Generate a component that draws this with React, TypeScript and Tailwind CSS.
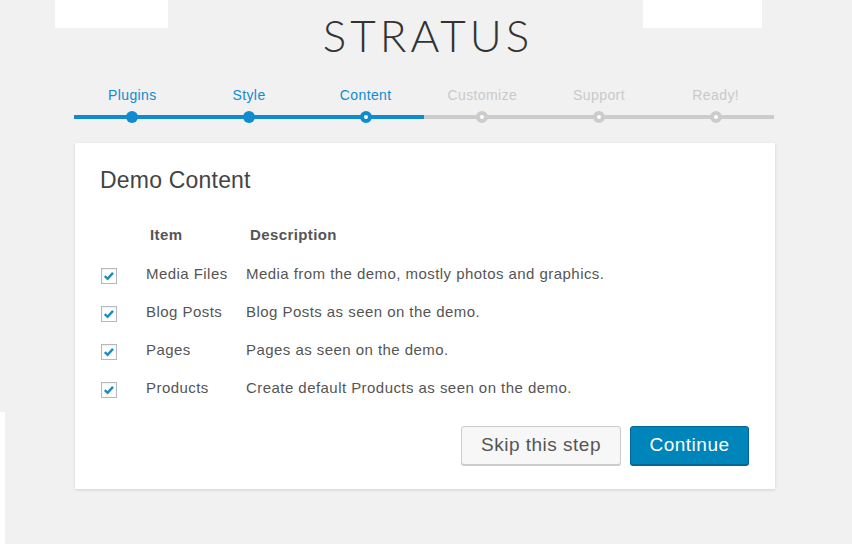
const steps = [
  { label: "Plugins", state: "done" },
  { label: "Style", state: "done" },
  { label: "Content", state: "active" },
  { label: "Customize", state: "todo" },
  { label: "Support", state: "todo" },
  { label: "Ready!", state: "todo" },
];

const items = [
  { name: "Media Files", desc: "Media from the demo, mostly photos and graphics." },
  { name: "Blog Posts", desc: "Blog Posts as seen on the demo." },
  { name: "Pages", desc: "Pages as seen on the demo." },
  { name: "Products", desc: "Create default Products as seen on the demo." },
];

function Checkbox() {
  return (
    <span className="flex size-4 items-center justify-center border border-[#b4b9be] bg-white shadow-[inset_0_1px_2px_rgba(0,0,0,0.07)]">
      <svg viewBox="0 0 16 16" className="size-[14px]">
        <path d="M3.2 8.2 L6.4 11.2 L12.6 4.4" fill="none" stroke="#1e8cbe" strokeWidth="2.8" />
      </svg>
    </span>
  );
}

export default function App() {
  return (
    <div className="relative min-h-[544px] bg-[#f1f1f1] font-['Liberation_Sans',Arial,sans-serif] text-[#444]">
      {/* stray white patches from the capture */}
      <div className="absolute left-[55px] top-0 h-[28px] w-[113px] bg-white" />
      <div className="absolute left-[643px] top-0 h-[28px] w-[119px] bg-white" />
      <div className="absolute left-0 top-[412px] h-[132px] w-[5px] bg-white" />

      <div className="relative pt-[13px] pl-[4px] text-center">
        <h1 className="font-['Lato',sans-serif] text-[44px] font-light leading-none tracking-[4px] text-[#333]">
          STRATUS
        </h1>
      </div>

      <ol className="relative mt-[28px] ml-[74px] flex w-[700px] pl-0">
        {steps.map((s) => {
          const blue = s.state !== "todo";
          return (
            <li key={s.label} className="flex flex-1 flex-col items-center">
              <span
                className={
                  "h-5 text-[14px] leading-5 tracking-[0.4px] " +
                  (blue ? "text-[#0f8ccf]" : "text-[#c9c9c9]")
                }
              >
                {s.label}
              </span>
              <div
                className={
                  "relative mt-[10px] h-1 w-full " + (blue ? "bg-[#0f8ccf]" : "bg-[#cccccc]")
                }
              >
                {s.state === "done" && (
                  <span className="absolute left-1/2 top-1/2 size-3 -translate-x-1/2 -translate-y-1/2 rounded-full bg-[#0f8ccf]" />
                )}
                {s.state === "active" && (
                  <span className="absolute left-1/2 top-1/2 size-3 -translate-x-1/2 -translate-y-1/2 rounded-full border-4 border-[#0f8ccf] bg-white" />
                )}
                {s.state === "todo" && (
                  <span className="absolute left-1/2 top-1/2 size-3 -translate-x-1/2 -translate-y-1/2 rounded-full border-4 border-[#cccccc] bg-white" />
                )}
              </div>
            </li>
          );
        })}
      </ol>

      <div className="relative mt-[24px] ml-[75px] w-[700px] bg-white px-[25px] pt-[23px] pb-[24px] shadow-[0_1px_3px_rgba(0,0,0,0.13)]">
        <h2 className="text-[23px] leading-[28px] tracking-[0.2px] text-[#444]">Demo Content</h2>

        <div className="mt-[21px] grid grid-cols-[46px_100px_1fr] text-[15px] tracking-[0.45px] text-[#555]">
          <div className="h-10" />
          <div className="flex h-10 items-center pl-1 text-[15px] font-bold tracking-[0.4px]">Item</div>
          <div className="flex h-10 items-center pl-1 text-[15px] font-bold tracking-[0.4px]">Description</div>
          {items.map((it) => (
            <div key={it.name} className="contents">
              <div className="flex h-[38px] items-center pl-px pt-[3px]">
                <Checkbox />
              </div>
              <div className="flex h-[38px] items-center">{it.name}</div>
              <div className="flex h-[38px] items-center">{it.desc}</div>
            </div>
          ))}
        </div>

        <div className="mt-[19px] flex justify-end gap-[9px] pr-px">
          <button className="h-[39px] w-[160px] rounded-[3px] border border-[#cccccc] bg-[#f7f7f7] text-[19px] tracking-[0.5px] text-[#555] shadow-[0_1px_0_#ccc]">
            Skip this step
          </button>
          <button className="h-[39px] w-[119px] rounded-[3px] border border-[#006799] bg-[#0085ba] text-[19px] tracking-[0.5px] text-white shadow-[0_1px_0_#006799]">
            Continue
          </button>
        </div>
      </div>
    </div>
  );
}
